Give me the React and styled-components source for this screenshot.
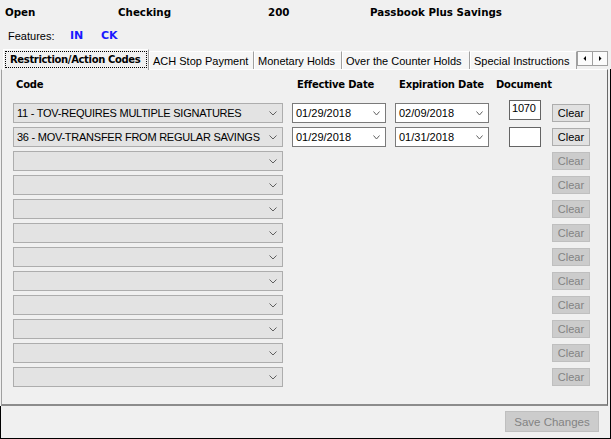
import React from "react";
import styled, { createGlobalStyle } from "styled-components";

const GlobalStyle = createGlobalStyle`
  html, body { margin: 0; padding: 0; background: #f0f0f0; }
  body { font-family: "Liberation Sans", Arial, sans-serif; font-size: 11px; color: #000; }
  * { box-sizing: border-box; }
`;

const Window = styled.div`
  width: 611px;
  height: 439px;
  display: flex;
  flex-direction: column;
  background: #f0f0f0;
  overflow: hidden;
`;

const SummaryRow = styled.div`
  display: grid;
  grid-template-columns: 113px 150px 102px auto;
  align-items: center;
  height: 24px;
  padding-left: 5px;
  font-family: "DejaVu Sans", Verdana, sans-serif;
  font-weight: bold;
  font-size: 10.3px;
`;

const FeaturesRow = styled.div`
  display: grid;
  grid-template-columns: 62px 31px auto;
  align-items: center;
  height: 23px;
  padding-left: 8px;
`;

const Feature = styled.span`
  font-family: "DejaVu Sans", Verdana, sans-serif;
  font-weight: bold;
  font-size: 11px;
  color: #1a1aff;
`;

const TabStrip = styled.div`
  display: flex;
  align-items: flex-end;
  height: 22px;
  padding-left: 3px;
  position: relative;
  z-index: 2;
`;

const Tab = styled.div`
  width: ${(p) => p.$w}px;
  height: ${(p) => (p.$active ? 21 : 18)}px;
  margin-bottom: ${(p) => (p.$active ? -1 : 0)}px;
  background: ${(p) => (p.$active ? "#f0f0f0" : "#f6f6f6")};
  border-top: 1px solid #fff;
  border-left: 1px solid #fff;
  border-right: 1px solid #a0a0a0;
  display: flex;
  align-items: center;
  padding: ${(p) => (p.$active ? "1px" : "0 0 0 3px")};
  font-family: ${(p) => (p.$active ? '"DejaVu Sans", Verdana, sans-serif' : '"Liberation Sans", Arial, sans-serif')};
  font-weight: ${(p) => (p.$active ? "bold" : "normal")};
  font-size: ${(p) => (p.$active ? "10px" : "11px")};
  white-space: nowrap;
  overflow: hidden;
`;

const FocusRect = styled.div`
  flex: 1;
  height: 17px;
  margin-bottom: 2px;
  border: 1px dotted #000;
  display: flex;
  align-items: center;
  padding-left: 4px;
  letter-spacing: -0.35px;
`;

const ScrollButtons = styled.div`
  display: flex;
  align-self: flex-start;
  margin-top: 4px;
`;

const ScrollButton = styled.div`
  width: 16px;
  height: 15px;
  background: #fbfbfb;
  border: 1px solid #a0a0a0;
  margin-left: ${(p) => (p.$second ? -1 : 0)}px;
  display: flex;
  align-items: center;
  justify-content: center;
`;

const Frame = styled.div`
  flex: 1;
  display: flex;
  flex-direction: column;
  border-right: 1px solid #000;
`;

const Panel = styled.div`
  flex: 1;
  margin: 0 2px 0 1px;
  border-top: 1px solid #ffffff;
  border-left: 1px solid #a0a0a0;
  border-right: 1px solid #696969;
  border-bottom: 2px solid #8c8c8c;
  display: flex;
  flex-direction: column;
`;

const HeaderLabels = styled.div`
  display: grid;
  grid-template-columns: 281px 102px 97px auto;
  height: 33px;
  padding: 9px 0 0 14px;
  line-height: 12px;
  font-family: "DejaVu Sans", Verdana, sans-serif;
  font-weight: bold;
  font-size: 10px;
  letter-spacing: -0.2px;
`;

const Rows = styled.div`
  display: flex;
  flex-direction: column;
  gap: 4px;
  padding-left: 11px;
`;

const Row = styled.div`
  display: grid;
  grid-template-columns: 279px 103px 114px 43px 38px;
  height: 20px;
  align-items: start;
`;

const Combo = styled.div`
  width: 270px;
  height: 20px;
  background: #e3e3e3;
  border: 1px solid #adadad;
  display: flex;
  align-items: center;
  justify-content: space-between;
  padding: 0 5px 0 3px;
  white-space: nowrap;
  letter-spacing: -0.25px;
`;

const DateBox = styled.div`
  width: 94px;
  height: 20px;
  background: #fff;
  border: 1px solid #7a7a7a;
  display: flex;
  align-items: center;
  justify-content: space-between;
  padding: 0 5px 0 3px;
`;

const DocBox = styled.div`
  width: 32px;
  height: 20px;
  margin-top: ${(p) => (p.$raised ? -3 : 0)}px;
  background: #fff;
  border: 1px solid #646464;
  display: flex;
  align-items: ${(p) => (p.$raised ? "flex-start" : "center")};
  padding: ${(p) => (p.$raised ? "1px 0 0 2px" : "0 0 0 2px")};
  letter-spacing: -0.2px;
`;

const ClearButton = styled.div`
  width: 38px;
  height: 18px;
  margin-top: 1px;
  background: ${(p) => (p.$disabled ? "#cccccc" : "#e1e1e1")};
  border: 1px solid ${(p) => (p.$disabled ? "#bfbfbf" : "#adadad")};
  color: ${(p) => (p.$disabled ? "#838383" : "#000")};
  display: flex;
  align-items: center;
  justify-content: center;
`;

const Footer = styled.div`
  height: 33px;
  border-left: 1px solid #000;
  border-bottom: 1px solid #000;
  display: flex;
  justify-content: flex-end;
  align-items: flex-start;
  padding: 5px 11px 0 0;
`;

const SaveButton = styled.div`
  width: 94px;
  height: 21px;
  background: #cccccc;
  border: 1px solid #bfbfbf;
  color: #838383;
  font-size: 11.5px;
  display: flex;
  align-items: center;
  justify-content: center;
`;

const Chevron = ({ w = 8 }) => (
  <svg width={w} height="5" viewBox={`0 0 ${w} 5`}>
    <polyline points={`0.5,0.5 ${w / 2},4 ${w - 0.5},0.5`} fill="none" stroke="#606060" strokeWidth="1" />
  </svg>
);

const Arrow = ({ dir }) => (
  <svg width="4" height="5" viewBox="0 0 4 5">
    {dir === "left" ? <polygon points="3,0 3,5 0.5,2.5" fill="#000" /> : <polygon points="1,0 1,5 3.5,2.5" fill="#000" />}
  </svg>
);

const tabs = [
  { label: "ACH Stop Payment", w: 105 },
  { label: "Monetary Holds", w: 88 },
  { label: "Over the Counter Holds", w: 128 },
  { label: "Special Instructions", w: 107 },
];

const rows = [
  { code: "11 - TOV-REQUIRES MULTIPLE SIGNATURES", eff: "01/29/2018", exp: "02/09/2018", doc: "1070" },
  { code: "36 - MOV-TRANSFER FROM REGULAR SAVINGS", eff: "01/29/2018", exp: "01/31/2018", doc: "" },
  ...Array.from({ length: 10 }, () => null),
];

export default function App() {
  return (
    <>
      <GlobalStyle />
      <Window>
        <SummaryRow>
          <span>Open</span>
          <span>Checking</span>
          <span>200</span>
          <span>Passbook Plus Savings</span>
        </SummaryRow>
        <FeaturesRow>
          <span>Features:</span>
          <Feature>IN</Feature>
          <Feature>CK</Feature>
        </FeaturesRow>
        <TabStrip>
          <Tab $active $w={146}>
            <FocusRect>Restriction/Action Codes</FocusRect>
          </Tab>
          {tabs.map((t) => (
            <Tab key={t.label} $w={t.w}>
              {t.label}
            </Tab>
          ))}
          <ScrollButtons>
            <ScrollButton>
              <Arrow dir="left" />
            </ScrollButton>
            <ScrollButton $second>
              <Arrow dir="right" />
            </ScrollButton>
          </ScrollButtons>
        </TabStrip>
        <Frame>
          <Panel>
            <HeaderLabels>
              <span>Code</span>
              <span>Effective Date</span>
              <span>Expiration Date</span>
              <span>Document</span>
            </HeaderLabels>
            <Rows>
              {rows.map((r, i) => (
                <Row key={i}>
                  <Combo>
                    <span>{r ? r.code : ""}</span>
                    <Chevron />
                  </Combo>
                  {r ? (
                    <DateBox>
                      <span>{r.eff}</span>
                      <Chevron w={7} />
                    </DateBox>
                  ) : (
                    <span />
                  )}
                  {r ? (
                    <DateBox>
                      <span>{r.exp}</span>
                      <Chevron w={7} />
                    </DateBox>
                  ) : (
                    <span />
                  )}
                  {r ? <DocBox $raised={!!r.doc}>{r.doc}</DocBox> : <span />}
                  <ClearButton $disabled={!r}>Clear</ClearButton>
                </Row>
              ))}
            </Rows>
          </Panel>
          <Footer>
            <SaveButton>Save Changes</SaveButton>
          </Footer>
        </Frame>
      </Window>
    </>
  );
}
